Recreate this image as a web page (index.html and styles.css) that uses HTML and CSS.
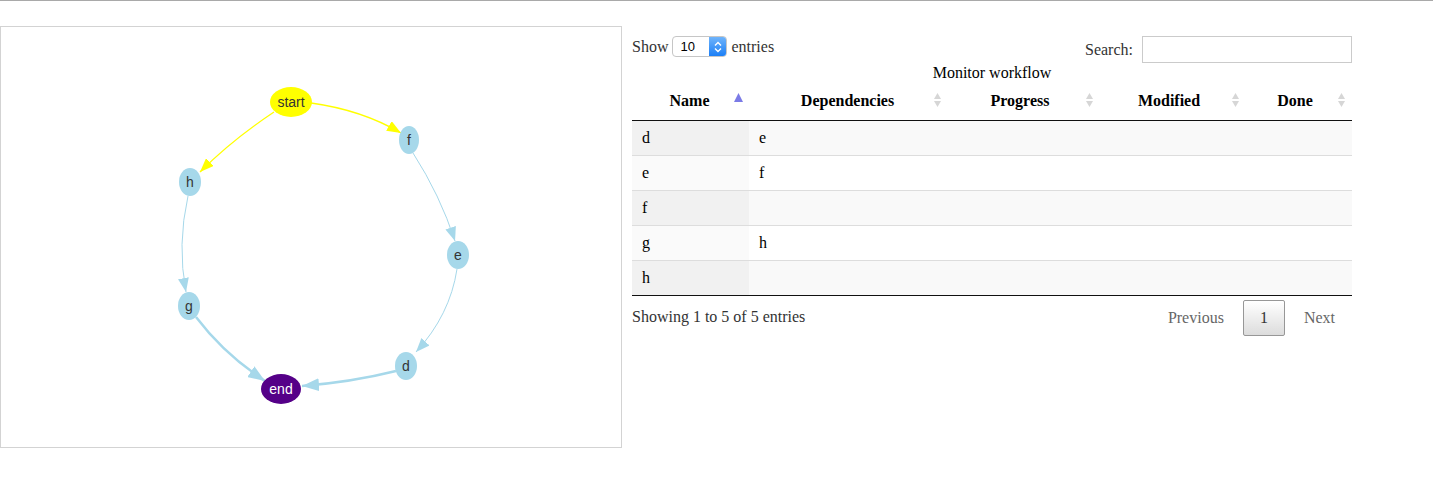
FILE: index.html
```html
<!DOCTYPE html>
<html lang="en">
<head>
    <meta charset="UTF-8">
    <title>Monitor workflow</title>
    <link rel="stylesheet" href="styles.css">
</head>
<body>
<div class="page">
    <!-- workflow graph -->
    <div class="graph_box">
        <svg class="graph" width="620" height="420" viewBox="1 27 620 420">
            <defs>
                <marker id="arr_y" markerUnits="userSpaceOnUse" markerWidth="14" markerHeight="11" viewBox="0 0 14 11" refX="14" refY="5.5" orient="auto">
                    <path d="M0,0 L14,5.5 L0,11 Z" fill="#ffff00"/>
                </marker>
                <marker id="arr_b" markerUnits="userSpaceOnUse" markerWidth="14" markerHeight="11" viewBox="0 0 14 11" refX="14" refY="5.5" orient="auto">
                    <path d="M0,0 L14,5.5 L0,11 Z" fill="#a6d8ea"/>
                </marker>
                <marker id="arr_bt" markerUnits="userSpaceOnUse" markerWidth="17" markerHeight="13" viewBox="0 0 17 13" refX="17" refY="6.5" orient="auto">
                    <path d="M0,0 L17,6.5 L0,13 Z" fill="#a6d8ea"/>
                </marker>
            </defs>
            <!-- edges -->
            <path class="edge yel" d="M311 103 Q362 110 401 133" marker-end="url(#arr_y)"/>
            <path class="edge yel" d="M274 112 Q232 140 200 172" marker-end="url(#arr_y)"/>
            <path class="edge" d="M413 153 Q440 195 455 241" marker-end="url(#arr_b)"/>
            <path class="edge" d="M188 196 Q177 245 186 292" marker-end="url(#arr_b)"/>
            <path class="edge" d="M457 269 Q450 315 416 352" marker-end="url(#arr_b)"/>
            <path class="edge thick" d="M196 317 Q224 354 265 381" marker-end="url(#arr_bt)"/>
            <path class="edge thick" d="M396 371 Q352 382 302 386" marker-end="url(#arr_bt)"/>
            <!-- nodes -->
            <ellipse cx="291" cy="102" rx="21" ry="15" fill="#ffff00"/>
            <text class="lbl" x="291" y="102">start</text>
            <ellipse cx="409" cy="140" rx="10" ry="14" fill="#a6d8ea"/>
            <text class="lbl" x="409" y="140">f</text>
            <ellipse cx="190" cy="182" rx="11" ry="14" fill="#a6d8ea"/>
            <text class="lbl" x="190" y="182">h</text>
            <ellipse cx="458" cy="255" rx="11" ry="14" fill="#a6d8ea"/>
            <text class="lbl" x="458" y="255">e</text>
            <ellipse cx="189" cy="306" rx="11" ry="14" fill="#a6d8ea"/>
            <text class="lbl" x="189" y="306">g</text>
            <ellipse cx="406" cy="366" rx="11" ry="14" fill="#a6d8ea"/>
            <text class="lbl" x="406" y="366">d</text>
            <ellipse cx="281" cy="389" rx="20" ry="15" fill="#550088"/>
            <text class="lbl white" x="281" y="389">end</text>
        </svg>
    </div>

    <!-- datatable -->
    <div class="dt_wrapper">
        <div class="dt_top">
            <div class="dt_length">
                Show
                <span class="fake_select">
                    <span class="sel_val">10</span>
                    <span class="sel_btn">
                        <svg width="8" height="12" viewBox="0 0 8 12"><path d="M1 4.5 L4 1.5 L7 4.5 M1 7.5 L4 10.5 L7 7.5" fill="none" stroke="#fff" stroke-width="1.4"/></svg>
                    </span>
                </span>
                entries
            </div>
            <div class="dt_filter">
                <label>Search:</label>
                <input type="search" class="search_input">
            </div>
        </div>
        <table class="dt">
            <caption>Monitor workflow</caption>
            <thead>
                <tr>
                    <th class="c1"><div class="th_in"><span class="th_txt">Name</span>
                        <svg class="sort" width="9" height="14" viewBox="0 0 9 14"><polygon points="4.5,0 9,9 0,9" fill="#7b7be6"/></svg></div></th>
                    <th class="c2"><div class="th_in"><span class="th_txt">Dependencies</span>
                        <svg class="sort" width="9" height="14" viewBox="0 0 9 14"><polygon points="4.5,0 8,6 1,6" fill="#d6d6d6"/><polygon points="1,8 8,8 4.5,14" fill="#d6d6d6"/></svg></div></th>
                    <th class="c3"><div class="th_in"><span class="th_txt">Progress</span>
                        <svg class="sort" width="9" height="14" viewBox="0 0 9 14"><polygon points="4.5,0 8,6 1,6" fill="#d6d6d6"/><polygon points="1,8 8,8 4.5,14" fill="#d6d6d6"/></svg></div></th>
                    <th class="c4"><div class="th_in"><span class="th_txt">Modified</span>
                        <svg class="sort" width="9" height="14" viewBox="0 0 9 14"><polygon points="4.5,0 8,6 1,6" fill="#d6d6d6"/><polygon points="1,8 8,8 4.5,14" fill="#d6d6d6"/></svg></div></th>
                    <th class="c5"><div class="th_in"><span class="th_txt">Done</span>
                        <svg class="sort" width="9" height="14" viewBox="0 0 9 14"><polygon points="4.5,0 8,6 1,6" fill="#d6d6d6"/><polygon points="1,8 8,8 4.5,14" fill="#d6d6d6"/></svg></div></th>
                </tr>
            </thead>
            <tbody>
                <tr class="odd"><td class="sorting_1">d</td><td>e</td><td></td><td></td><td></td></tr>
                <tr class="even"><td class="sorting_1">e</td><td>f</td><td></td><td></td><td></td></tr>
                <tr class="odd"><td class="sorting_1">f</td><td></td><td></td><td></td><td></td></tr>
                <tr class="even"><td class="sorting_1">g</td><td>h</td><td></td><td></td><td></td></tr>
                <tr class="odd"><td class="sorting_1">h</td><td></td><td></td><td></td><td></td></tr>
            </tbody>
        </table>
        <div class="dt_bottom">
            <div class="dt_info">Showing 1 to 5 of 5 entries</div>
            <div class="dt_paginate">
                <a class="page_btn disabled">Previous</a>
                <a class="page_btn current">1</a>
                <a class="page_btn disabled">Next</a>
            </div>
        </div>
    </div>
</div>
</body>
</html>
```

FILE: styles.css
```css
*{
    margin:0;
    padding:0;
    box-sizing: border-box;
}
body{
    font-family: "Liberation Serif", "Times New Roman", serif;
    font-size:16px;
    color:#000;
    background:#fff;
    border-top:1px solid #a9a9a9;
}
.page{
    display: flex;
    align-items: flex-start;
    gap:10px;
}

/* graph */
.graph_box{
    width:622px;
    height:422px;
    margin-top:25px;
    border:1px solid #d3d3d3;
}
.graph{
    display: block;
}
.edge{
    fill:none;
    stroke:#a6d8ea;
    stroke-width:1;
}
.edge.yel{
    stroke:#ffff00;
    stroke-width:1.3;
}
.edge.thick{
    stroke-width:2.5;
}
.lbl{
    font-family: "Liberation Sans", Arial, sans-serif;
    font-size:14px;
    fill:#343434;
    text-anchor: middle;
    dominant-baseline: central;
}
.lbl.white{
    fill:#fff;
}

/* datatable */
.dt_wrapper{
    width:720px;
    margin-top:35px;
}
.dt_top{
    display: flex;
    justify-content: space-between;
    align-items: flex-start;
}
.dt_length{
    display: flex;
    align-items: center;
    gap:4px;
    line-height:20px;
    color:#333;
}
.fake_select{
    display: inline-flex;
    align-items: stretch;
    width:55px;
    height:21px;
    border:1px solid #c6c6c6;
    border-radius:4px;
    background:#fff;
    overflow: hidden;
}
.sel_val{
    flex:1;
    font-family: "Liberation Sans", Arial, sans-serif;
    font-size:13px;
    line-height:19px;
    padding-left:7px;
    color:#000;
}
.sel_btn{
    width:17px;
    display: flex;
    align-items: center;
    justify-content: center;
    background:linear-gradient(#6fb4fb,#1c7ff6);
}
.dt_filter{
    display: flex;
    align-items: center;
    gap:9px;
    color:#333;
}
.search_input{
    width:210px;
    height:27px;
    border:1px solid #cbcbcb;
    background:#fff;
}
.dt{
    width:720px;
    border-collapse: collapse;
    border-bottom:1px solid #111;
}
.dt caption{
    line-height:18px;
    padding-top:1px;
    text-align: center;
}
.dt th{
    padding:10px 6px 10px 10px;
    line-height:18px;
    font-weight: bold;
    border-bottom:1px solid #111;
}
.th_in{
    display: flex;
    align-items: center;
}
.th_txt{
    flex:1;
    text-align: center;
}
.sort{
    margin-left:3px;
    margin-top:-3px;
}
.dt .c1{ width:117px; padding-left:16px; }
.dt .c2{ width:199px; padding-left:16px; }
.dt .c3{ width:152px; }
.dt .c4{ width:146px; }
.dt .c5{ width:106px; }
.dt td{
    padding:8px 10px;
    line-height:18px;
    border-top:1px solid #ddd;
}
.dt tbody tr:first-child td{
    border-top:none;
}
.dt tr.odd{
    background:#f9f9f9;
}
.dt tr.even{
    background:#fff;
}
.dt tr.odd td.sorting_1{
    background:#f1f1f1;
}
.dt tr.even td.sorting_1{
    background:#fafafa;
}
.dt_bottom{
    display: flex;
    justify-content: space-between;
    align-items: flex-start;
}
.dt_info{
    padding-top:12px;
    line-height:18px;
    color:#333;
}
.dt_paginate{
    padding-top:4px;
    display: flex;
}
.page_btn{
    display: block;
    padding:8px 16px;
    margin-left:2px;
    line-height:18px;
    border:1px solid transparent;
    border-radius:2px;
    color:#333;
}
.page_btn.disabled{
    color:#666;
}
.page_btn.current{
    border:1px solid #979797;
    background:linear-gradient(#fff,#dcdcdc);
}
```
